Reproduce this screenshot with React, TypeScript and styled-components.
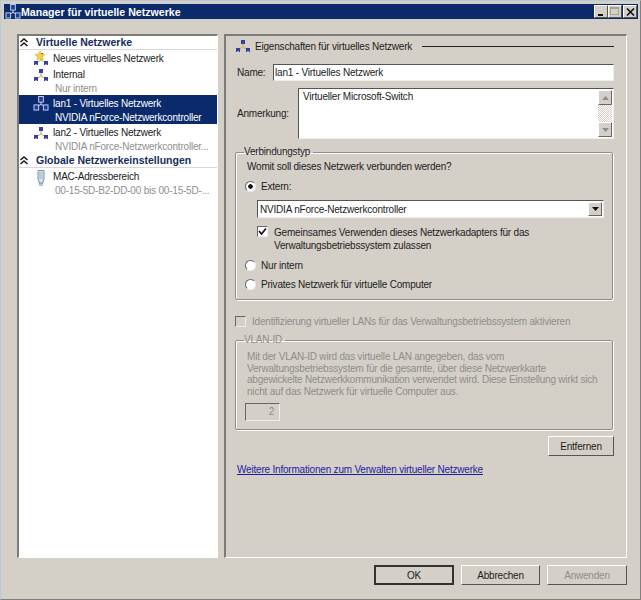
import React from 'react'
import styled, { createGlobalStyle } from 'styled-components'

const Global = createGlobalStyle`
  html, body { margin: 0; padding: 0; background: #d4d0c8; }
  * { box-sizing: border-box; }
`

const uiFont = `"Liberation Sans", Tahoma, sans-serif`

const Window = styled.div`
  width: 641px;
  height: 600px;
  overflow: hidden;
  display: flex;
  flex-direction: column;
  background: #d4d0c8;
  color: #1c1c1c;
  font-family: ${uiFont};
  font-size: 10px;
  letter-spacing: -0.2px;
  padding: 3px 2px 2px 3px;
  border-top: 1px solid #b9c9dc;
  border-left: 1px solid #b9c9dc;
  border-right: 1px solid #808080;
  border-bottom: 1px solid #808080;
`

const TitleBar = styled.div`
  height: 15px;
  flex: none;
  display: flex;
  align-items: center;
  padding: 0 1px 0 1px;
  background: #0a2a6c;
  color: #fff;
`

const TitleText = styled.span`
  font-weight: bold;
  font-size: 10.6px;
  letter-spacing: 0;
  flex: 1;
`

const WinButton = styled.div<{ $gap?: boolean }>`
  width: 14px;
  height: 13px;
  margin-left: ${p => (p.$gap ? 1 : 0)}px;
  display: flex;
  align-items: center;
  justify-content: center;
  background: #d4d0c8;
  border-top: 1px solid #fff;
  border-left: 1px solid #fff;
  border-right: 1px solid #555;
  border-bottom: 1px solid #555;
`

const Main = styled.div`
  flex: none;
  height: 524px;
  margin: 15px 11px 0 13px;
  display: flex;
  gap: 6px;
`

const ListPanel = styled.div`
  width: 201px;
  flex: none;
  background: #fff;
  border-top: 2px solid #7e7c78;
  border-left: 2px solid #7e7c78;
  border-right: 1px solid #fff;
  border-bottom: 1px solid #fff;
`

const GroupHead = styled.div`
  height: 14px;
  display: flex;
  align-items: center;
  gap: 7px;
  padding-bottom: 1px;
  font-weight: bold;
  font-size: 10.5px;
  letter-spacing: 0;
  color: #152c5c;
  border-bottom: 1px solid #d8d8d8;
`

const Item = styled.div<{ $sel?: boolean; $h: number }>`
  height: ${p => p.$h}px;
  display: flex;
  gap: 4px;
  padding: 1px 0 0 14px;
  background: ${p => (p.$sel ? '#0a2a6c' : 'transparent')};
  color: ${p => (p.$sel ? '#fff' : '#1c1c1c')};
`

const ItemIcon = styled.div`
  width: 16px;
  height: 16px;
  flex: none;
`

const ItemText = styled.div`
  min-width: 0;
  padding-top: 1px;
  line-height: 14px;
`

const ItemSub = styled.div<{ $sel?: boolean }>`
  color: ${p => (p.$sel ? '#fff' : '#8f8f8f')};
  margin-left: 2px;
  white-space: nowrap;
`

const Details = styled.div`
  flex: 1;
  min-width: 0;
  padding: 2px 12px 0 9px;
  border-top: 2px solid #7e7c78;
  border-left: 2px solid #7e7c78;
  border-right: 1px solid #fff;
  border-bottom: 1px solid #fff;
`

const Heading = styled.div`
  display: flex;
  align-items: center;
  height: 16px;
  gap: 4px;
`

const HeadingRule = styled.div`
  flex: 1;
  height: 1px;
  background: #222;
  margin-left: 6px;
`

const NameRow = styled.div`
  display: flex;
  align-items: center;
  margin-top: 10px;
`

const NoteRow = styled.div`
  display: flex;
  align-items: center;
  margin-top: 7px;
  height: 51px;
`

const FieldLabel = styled.label<{ $w: number }>`
  width: ${p => p.$w}px;
  padding-left: 2px;
  flex: none;
`

const Sunken = styled.div`
  background: #fff;
  border-top: 1px solid #555;
  border-left: 1px solid #555;
  border-right: 1px solid #eee;
  border-bottom: 1px solid #eee;
`

const NameBox = styled(Sunken)`
  flex: 1;
  height: 17px;
  line-height: 15px;
  padding-left: 1px;
`

const NoteBox = styled(Sunken)`
  flex: 1;
  height: 51px;
  display: flex;
  justify-content: space-between;
  padding: 1px 1px 1px 4px;
  line-height: 13px;
`

const ScrollTrack = styled.div`
  width: 14px;
  display: flex;
  flex-direction: column;
  justify-content: space-between;
  background: repeating-conic-gradient(#d4d0c8 0 25%, #fff 0 50%) 0 0 / 2px 2px;
`

const ScrollBtn = styled.div`
  height: 15px;
  display: flex;
  align-items: center;
  justify-content: center;
  background: #d4d0c8;
  border-top: 1px solid #fff;
  border-left: 1px solid #fff;
  border-right: 1px solid #666;
  border-bottom: 1px solid #666;
`

const Group = styled.fieldset<{ $h: number; $mt: number; $off?: boolean }>`
  margin: ${p => p.$mt}px 1px 0 0;
  padding: 0 8px 0 11px;
  min-width: 0;
  height: ${p => p.$h}px;
  border: 1px solid #8f8e8a;
  box-shadow: 1px 1px 0 #fff, inset 1px 1px 0 #fff;
  border-radius: 2px;
  color: ${p => (p.$off ? '#8e8e8a' : 'inherit')};
  & > legend {
    padding: 0 3px 0 0;
    margin-left: -3px;
    line-height: 12px;
  }
`

const Question = styled.div`
  margin-top: 3px;
  line-height: 12px;
`

const RadioRow = styled.div<{ $mt: number }>`
  display: flex;
  align-items: center;
  gap: 5px;
  margin: ${p => p.$mt}px 0 0 -2px;
  height: 13px;
`

const RadioDot = styled.div<{ $on?: boolean }>`
  width: 11px;
  height: 11px;
  flex: none;
  border-radius: 50%;
  background: ${p => (p.$on ? 'radial-gradient(circle, #111 0 2px, #fff 2.5px)' : '#fff')};
  border: 1px solid;
  border-color: #666 #eee #eee #666;
`

const SelectBox = styled(Sunken)`
  display: flex;
  align-items: center;
  justify-content: space-between;
  height: 18px;
  margin: 7px 0 0 10px;
  padding: 0 1px 0 2px;
`

const SelectBtn = styled(ScrollBtn)`
  width: 14px;
  height: 14px;
`

const CheckRow = styled.div`
  display: flex;
  gap: 6px;
  margin: 8px 0 0 10px;
  line-height: 13px;
`

const CheckBox = styled.div<{ $off?: boolean }>`
  width: 11px;
  height: 11px;
  flex: none;
  display: flex;
  align-items: center;
  justify-content: center;
  background: ${p => (p.$off ? '#d4d0c8' : '#fff')};
  border-top: 1px solid #666;
  border-left: 1px solid #666;
  border-right: 1px solid #eee;
  border-bottom: 1px solid #eee;
`

const VlanCheck = styled.div`
  display: flex;
  align-items: center;
  gap: 6px;
  height: 13px;
  margin-top: 15px;
  color: #8e8e8a;
`

const VlanText = styled.div`
  margin-top: 5px;
  line-height: 11.5px;
  white-space: nowrap;
`

const VlanInput = styled.div`
  width: 35px;
  height: 18px;
  margin: 6px 0 0 -2px;
  line-height: 16px;
  text-align: right;
  padding-right: 5px;
  background: #d4d0c8;
  border-top: 1px solid #666;
  border-left: 1px solid #666;
  border-right: 1px solid #eee;
  border-bottom: 1px solid #eee;
`

const PushButton = styled.button<{ $w: number; $main?: boolean }>`
  width: ${p => p.$w}px;
  height: 20px;
  padding: 0;
  font-family: ${uiFont};
  font-size: 10px;
  letter-spacing: -0.2px;
  color: ${p => (p.disabled ? '#8e8e8a' : '#1c1c1c')};
  background: #d4d0c8;
  border-style: solid;
  border-width: ${p => (p.$main ? 2 : 1)}px;
  border-color: ${p => (p.$main ? '#333' : '#fff #555 #555 #fff')};
`

const RemoveRow = styled.div`
  display: flex;
  justify-content: flex-end;
  margin-top: 6px;
`

const MoreLink = styled.a`
  display: block;
  margin: 7px 0 0 2px;
  color: #1c1c9e;
  text-decoration: underline;
  line-height: 13px;
`

const Footer = styled.div`
  flex: none;
  display: flex;
  justify-content: flex-end;
  gap: 7px;
  margin: 7px 11px 0 0;
`

// kleines Netzwerk-Symbol: drei Knoten im Dreieck
const NetIcon = ({ star }: { star?: boolean }) => (
  <svg width="16" height="16" viewBox="0 0 16 16">
    <path d="M8 5 V9 M8 9 L3 12 M8 9 L13 12" stroke="#a9a88a" strokeWidth="1" fill="none" />
    <rect x="7" y="8" width="2" height="2" fill="#e3c94a" />
    <rect x="6" y="2" width="4" height="4" fill="#3a3f9a" />
    <rect x="1" y="10" width="4" height="4" fill="#3a3f9a" />
    <rect x="11" y="10" width="4" height="4" fill="#3a3f9a" />
    <rect x="2" y="13" width="2" height="1" fill="#9aa8d8" />
    <rect x="12" y="13" width="2" height="1" fill="#9aa8d8" />
    {star && <path d="M7 0 L8.5 3 L12 3.5 L9.5 6 L10 9 L7 7.5 L4 9 L4.5 6 L2 3.5 L5.5 3 Z" fill="#f2d43c" stroke="#c9a520" strokeWidth="0.5" />}
  </svg>
)

const NetIconOutline = () => (
  <svg width="16" height="15" viewBox="0 0 16 16">
    <path d="M8 6 V9 M8 9 L4 11 M8 9 L12 11" stroke="#dfe6f6" strokeWidth="1" fill="none" />
    <rect x="5.5" y="0.5" width="5" height="6" fill="#1f3f94" stroke="#c7d2f0" />
    <rect x="0.5" y="9.5" width="5" height="5.5" fill="#1f3f94" stroke="#c7d2f0" />
    <rect x="10.5" y="9.5" width="5" height="5.5" fill="#1f3f94" stroke="#c7d2f0" />
  </svg>
)

const MacIcon = () => (
  <svg width="16" height="18" viewBox="0 0 16 18">
    <path d="M5 1.5 H11 V11 L10 12 V14 H6 V12 L5 11 Z" fill="#d5e3ee" stroke="#7f93a6" />
    <path d="M7 3 V10 M9 3 V10" stroke="#9fb4c6" />
    <path d="M7 14 V17 M9 14 V17" stroke="#4f9a9a" />
  </svg>
)

const Chevrons = () => (
  <svg width="10" height="9" viewBox="0 0 10 9">
    <path d="M1.5 4 L5 1 L8.5 4 M1.5 8 L5 5 L8.5 8" stroke="#1a1a1a" strokeWidth="1.6" fill="none" />
  </svg>
)

const Arrow = ({ up, color = '#444' }: { up?: boolean; color?: string }) => (
  <svg width="7" height="4" viewBox="0 0 7 4">
    <path d={up ? 'M3.5 0 L7 4 H0 Z' : 'M0 0 H7 L3.5 4 Z'} fill={color} />
  </svg>
)

const Tick = () => (
  <svg width="9" height="9" viewBox="0 0 9 9">
    <path d="M1 4 L3.5 7 L8 1.5" stroke="#111" strokeWidth="1.7" fill="none" />
  </svg>
)

export default function App() {
  return (
    <Window>
      <Global />
      <TitleBar>
        <NetIconOutline />
        <TitleText>Manager für virtuelle Netzwerke</TitleText>
        <WinButton>
          <svg width="8" height="8" viewBox="0 0 8 8"><rect x="1" y="6" width="5" height="2" fill="#111" /></svg>
        </WinButton>
        <WinButton>
          <svg width="10" height="9" viewBox="0 0 10 9"><rect x="0.5" y="0.5" width="8" height="7" fill="none" stroke="#a5a29a" /><rect x="0.5" y="0.5" width="8" height="1.5" fill="#a5a29a" /></svg>
        </WinButton>
        <WinButton $gap>
          <svg width="9" height="8" viewBox="0 0 9 8"><path d="M1 0.5 L8 7.5 M8 0.5 L1 7.5" stroke="#111" strokeWidth="1.6" /></svg>
        </WinButton>
      </TitleBar>

      <Main>
        <ListPanel>
          <GroupHead><Chevrons />Virtuelle Netzwerke</GroupHead>
          <Item $h={16}>
            <ItemIcon><NetIcon star /></ItemIcon>
            <ItemText>Neues virtuelles Netzwerk</ItemText>
          </Item>
          <Item $h={29}>
            <ItemIcon><NetIcon /></ItemIcon>
            <ItemText>Internal<ItemSub>Nur intern</ItemSub></ItemText>
          </Item>
          <Item $h={29} $sel>
            <ItemIcon><NetIconOutline /></ItemIcon>
            <ItemText>lan1 - Virtuelles Netzwerk<ItemSub $sel>NVIDIA nForce-Netzwerkcontroller</ItemSub></ItemText>
          </Item>
          <Item $h={30}>
            <ItemIcon><NetIcon /></ItemIcon>
            <ItemText>lan2 - Virtuelles Netzwerk<ItemSub>NVIDIA nForce-Netzwerkcontroller...</ItemSub></ItemText>
          </Item>
          <GroupHead><Chevrons />Globale Netzwerkeinstellungen</GroupHead>
          <Item $h={30}>
            <ItemIcon><MacIcon /></ItemIcon>
            <ItemText>MAC-Adressbereich<ItemSub>00-15-5D-B2-DD-00 bis 00-15-5D-...</ItemSub></ItemText>
          </Item>
        </ListPanel>

        <Details>
          <Heading>
            <NetIcon />
            Eigenschaften für virtuelles Netzwerk
            <HeadingRule />
          </Heading>
          <NameRow>
            <FieldLabel $w={38}>Name:</FieldLabel>
            <NameBox>lan1 - Virtuelles Netzwerk</NameBox>
          </NameRow>
          <NoteRow>
            <FieldLabel $w={63}>Anmerkung:</FieldLabel>
            <NoteBox>
              Virtueller Microsoft-Switch
              <ScrollTrack>
                <ScrollBtn><Arrow up color="#8f8f8a" /></ScrollBtn>
                <ScrollBtn><Arrow color="#8f8f8a" /></ScrollBtn>
              </ScrollTrack>
            </NoteBox>
          </NoteRow>

          <Group $h={154} $mt={7}>
            <legend>Verbindungstyp</legend>
            <Question>Womit soll dieses Netzwerk verbunden werden?</Question>
            <RadioRow $mt={7}><RadioDot $on />Extern:</RadioRow>
            <SelectBox>
              NVIDIA nForce-Netzwerkcontroller
              <SelectBtn><Arrow color="#111" /></SelectBtn>
            </SelectBox>
            <CheckRow>
              <CheckBox><Tick /></CheckBox>
              <div>Gemeinsames Verwenden dieses Netzwerkadapters für das<br />Verwaltungsbetriebssystem zulassen</div>
            </CheckRow>
            <RadioRow $mt={7}><RadioDot />Nur intern</RadioRow>
            <RadioRow $mt={6}><RadioDot />Privates Netzwerk für virtuelle Computer</RadioRow>
          </Group>

          <VlanCheck>
            <CheckBox $off />
            Identifizierung virtueller LANs für das Verwaltungsbetriebssystem aktivieren
          </VlanCheck>

          <Group $h={96} $mt={6} $off>
            <legend>VLAN-ID</legend>
            <VlanText>
              Mit der VLAN-ID wird das virtuelle LAN angegeben, das vom<br />
              Verwaltungsbetriebssystem für die gesamte, über diese Netzwerkkarte<br />
              abgewickelte Netzwerkkommunikation verwendet wird. Diese Einstellung wirkt sich<br />
              nicht auf das Netzwerk für virtuelle Computer aus.
            </VlanText>
            <VlanInput>2</VlanInput>
          </Group>

          <RemoveRow><PushButton $w={66}>Entfernen</PushButton></RemoveRow>
          <MoreLink href="#">Weitere Informationen zum Verwalten virtueller Netzwerke</MoreLink>
        </Details>
      </Main>

      <Footer>
        <PushButton $w={80} $main>OK</PushButton>
        <PushButton $w={79}>Abbrechen</PushButton>
        <PushButton $w={80} disabled>Anwenden</PushButton>
      </Footer>
    </Window>
  )
}
